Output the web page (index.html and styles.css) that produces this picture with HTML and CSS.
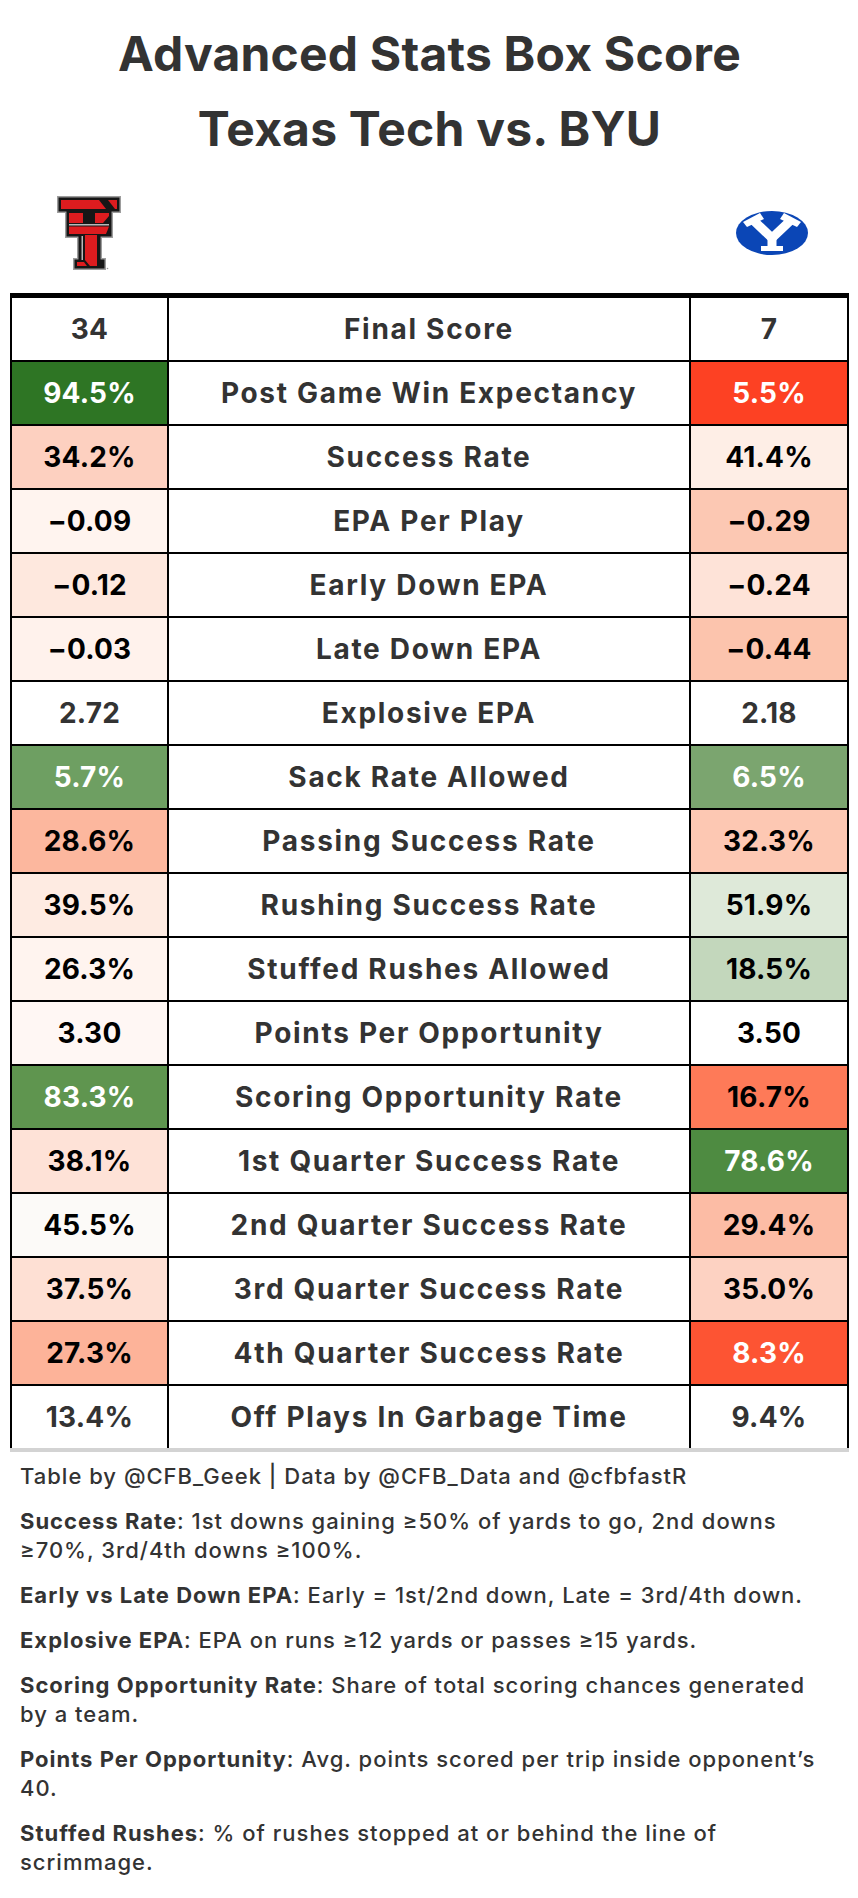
FILE: index.html
```html
<!DOCTYPE html>
<html lang="en">
<head>
<meta charset="utf-8">
<title>Advanced Stats Box Score</title>
<link rel="stylesheet" href="styles.css">
</head>
<body>
<div class="page">
  <header class="title">
    <div class="title-line">Advanced Stats Box Score</div>
    <div class="title-line">Texas Tech vs. BYU</div>
  </header>

  <div class="logos">
    <div class="logo-cell">
      <svg class="logo-tt" width="64" height="74" viewBox="0 0 64 74" aria-label="Texas Tech">
        <polygon fill="#9d9d9d" points="0,0 64,0 64,17 56,17 56,42 45,42 45,62 49,62 49,74 16,74 16,62 20,62 20,42 8,42 8,17 0,17"/>
        <polygon fill="#161616" points="1.5,1.5 62.5,1.5 62.5,15.5 54.5,15.5 54.5,40.5 43.5,40.5 43.5,63.5 47.5,63.5 47.5,72.5 17.5,72.5 17.5,63.5 21.5,63.5 21.5,40.5 9.5,40.5 9.5,15.5 1.5,15.5"/>
        <polygon fill="#dd1c1f" points="4,4 42,4 49,13 4,13"/>
        <polygon fill="#dd1c1f" points="51,4 60,4 60,13 58,13"/>
        <polygon fill="#dd1c1f" points="12,17 26,17 26,27 12,27"/>
        <polygon fill="#dd1c1f" points="38,17 52,17 52,20 46,27 38,27"/>
        <rect x="12" y="28" width="40" height="1.5" fill="#b9b9b9"/>
        <polygon fill="#dd1c1f" points="12,30.5 52,30.5 49,38 12,38"/>
        <rect x="24.5" y="40" width="1.5" height="24" fill="#b9b9b9"/>
        <polygon fill="#dd1c1f" points="28,39 40,39 40,70 33,70 28,64"/>
        <polygon fill="#dd1c1f" points="20,66 27,66 30,70 20,70"/>
        <circle cx="50.5" cy="72.5" r="0.8" fill="#999"/>
      </svg>
    </div>
    <div class="logo-spacer"></div>
    <div class="logo-cell">
      <svg class="logo-byu" width="72" height="44" viewBox="0 0 72 44" aria-label="BYU">
        <ellipse cx="36" cy="22" rx="36" ry="22" fill="#0b46b6"/>
        <path d="M18 10 L36 27 L54 10" fill="none" stroke="#fff" stroke-width="9" stroke-linejoin="miter"/>
        <polygon fill="#fff" points="7,11 24,2 28,8 11,16"/>
        <polygon fill="#fff" points="65,11 48,2 44,8 61,16"/>
        <rect x="31.5" y="24" width="9" height="13" fill="#fff"/>
        <rect x="25" y="35" width="22" height="5" fill="#fff"/>
      </svg>
    </div>
  </div>

  <div class="box">
    <div class="cell plain">34</div><div class="label">Final Score</div><div class="cell plain">7</div>
    <div class="cell light-text" style="background:#2e7524">94.5%</div><div class="label">Post Game Win Expectancy</div><div class="cell light-text" style="background:#fd4123">5.5%</div>
    <div class="cell" style="background:#fdd0c0">34.2%</div><div class="label">Success Rate</div><div class="cell" style="background:#feeee6">41.4%</div>
    <div class="cell" style="background:#fff4ef">&minus;0.09</div><div class="label">EPA Per Play</div><div class="cell" style="background:#fcc8b3">&minus;0.29</div>
    <div class="cell" style="background:#fee8de">&minus;0.12</div><div class="label">Early Down EPA</div><div class="cell" style="background:#fee3d8">&minus;0.24</div>
    <div class="cell" style="background:#fff2ec">&minus;0.03</div><div class="label">Late Down EPA</div><div class="cell" style="background:#fcc4ad">&minus;0.44</div>
    <div class="cell plain">2.72</div><div class="label">Explosive EPA</div><div class="cell plain">2.18</div>
    <div class="cell light-text" style="background:#6e9f62">5.7%</div><div class="label">Sack Rate Allowed</div><div class="cell light-text" style="background:#7ba56f">6.5%</div>
    <div class="cell" style="background:#fcb79e">28.6%</div><div class="label">Passing Success Rate</div><div class="cell" style="background:#fdc8b3">32.3%</div>
    <div class="cell" style="background:#feebe2">39.5%</div><div class="label">Rushing Success Rate</div><div class="cell" style="background:#dee9d9">51.9%</div>
    <div class="cell" style="background:#fff4ef">26.3%</div><div class="label">Stuffed Rushes Allowed</div><div class="cell" style="background:#c3d7bc">18.5%</div>
    <div class="cell" style="background:#fff7f4">3.30</div><div class="label">Points Per Opportunity</div><div class="cell" style="background:#ffffff">3.50</div>
    <div class="cell light-text" style="background:#5f954f">83.3%</div><div class="label">Scoring Opportunity Rate</div><div class="cell" style="background:#fe7a58">16.7%</div>
    <div class="cell" style="background:#fee2d7">38.1%</div><div class="label">1st Quarter Success Rate</div><div class="cell light-text" style="background:#4e8b41">78.6%</div>
    <div class="cell" style="background:#fcfaf8">45.5%</div><div class="label">2nd Quarter Success Rate</div><div class="cell" style="background:#fcbca5">29.4%</div>
    <div class="cell" style="background:#fee0d4">37.5%</div><div class="label">3rd Quarter Success Rate</div><div class="cell" style="background:#fdd2c2">35.0%</div>
    <div class="cell" style="background:#fdb399">27.3%</div><div class="label">4th Quarter Success Rate</div><div class="cell light-text" style="background:#fd5433">8.3%</div>
    <div class="cell plain">13.4%</div><div class="label">Off Plays In Garbage Time</div><div class="cell plain">9.4%</div>
  </div>

  <footer class="notes">
    <p>Table by @CFB_Geek | Data by @CFB_Data and @cfbfastR</p>
    <p><b>Success Rate</b>: 1st downs gaining ≥50% of yards to go, 2nd downs ≥70%, 3rd/4th downs ≥100%.</p>
    <p><b>Early vs Late Down EPA</b>: Early = 1st/2nd down, Late = 3rd/4th down.</p>
    <p><b>Explosive EPA</b>: EPA on runs ≥12 yards or passes ≥15 yards.</p>
    <p><b>Scoring Opportunity Rate</b>: Share of total scoring chances generated by a team.</p>
    <p><b>Points Per Opportunity</b>: Avg. points scored per trip inside opponent’s 40.</p>
    <p><b>Stuffed Rushes</b>: % of rushes stopped at or behind the line of scrimmage.</p>
  </footer>
</div>
</body>
</html>
```

FILE: styles.css
```css
html, body {
  margin: 0;
  padding: 0;
  background: #ffffff;
}

.page {
  width: 839px;
  padding: 0 9px 0 10px;
  font-family: Inter, Roboto, "Liberation Sans", sans-serif;
  color: #333333;
}

.title {
  padding-top: 16px;
  text-align: center;
}

.title-line {
  font-size: 48px;
  font-weight: 700;
  line-height: 75px;
  letter-spacing: 0.2px;
  color: #333333;
}

.logos {
  display: flex;
  height: 121px;
  align-items: center;
  margin-top: 6px;
}

.logo-cell {
  width: 158px;
  display: flex;
  justify-content: center;
  align-items: center;
}

.logo-cell:last-child {
  width: 160px;
  padding-left: 6px;
  box-sizing: border-box;
}

.logo-spacer {
  flex: 1;
}

.logo-tt, .logo-byu {
  display: block;
}

.box {
  display: grid;
  grid-template-columns: 155px 520px 156px;
  grid-auto-rows: 62px;
  gap: 2px;
  background: #000000;
  padding: 5px 2px 0 2px;
  border-bottom: 4px solid #d3d3d3;
}

.cell, .label {
  display: flex;
  align-items: center;
  justify-content: center;
  font-size: 28px;
  font-weight: 700;
  background: #ffffff;
}

.cell {
  color: #000000;
  letter-spacing: 0.2px;
}

.cell.plain {
  color: #333333;
}

.cell.light-text {
  color: #ffffff;
}

.label {
  color: #333333;
  letter-spacing: 1.7px;
}

.notes {
  width: 812px;
  padding: 10px 0 20px 10px;
  font-size: 22px;
  font-weight: 500;
  line-height: 29px;
  letter-spacing: 1px;
  color: #333333;
}

.notes p {
  margin: 0 0 16px 0;
}

.notes p:last-child {
  margin-bottom: 0;
}

.notes b {
  font-weight: 700;
}
```
